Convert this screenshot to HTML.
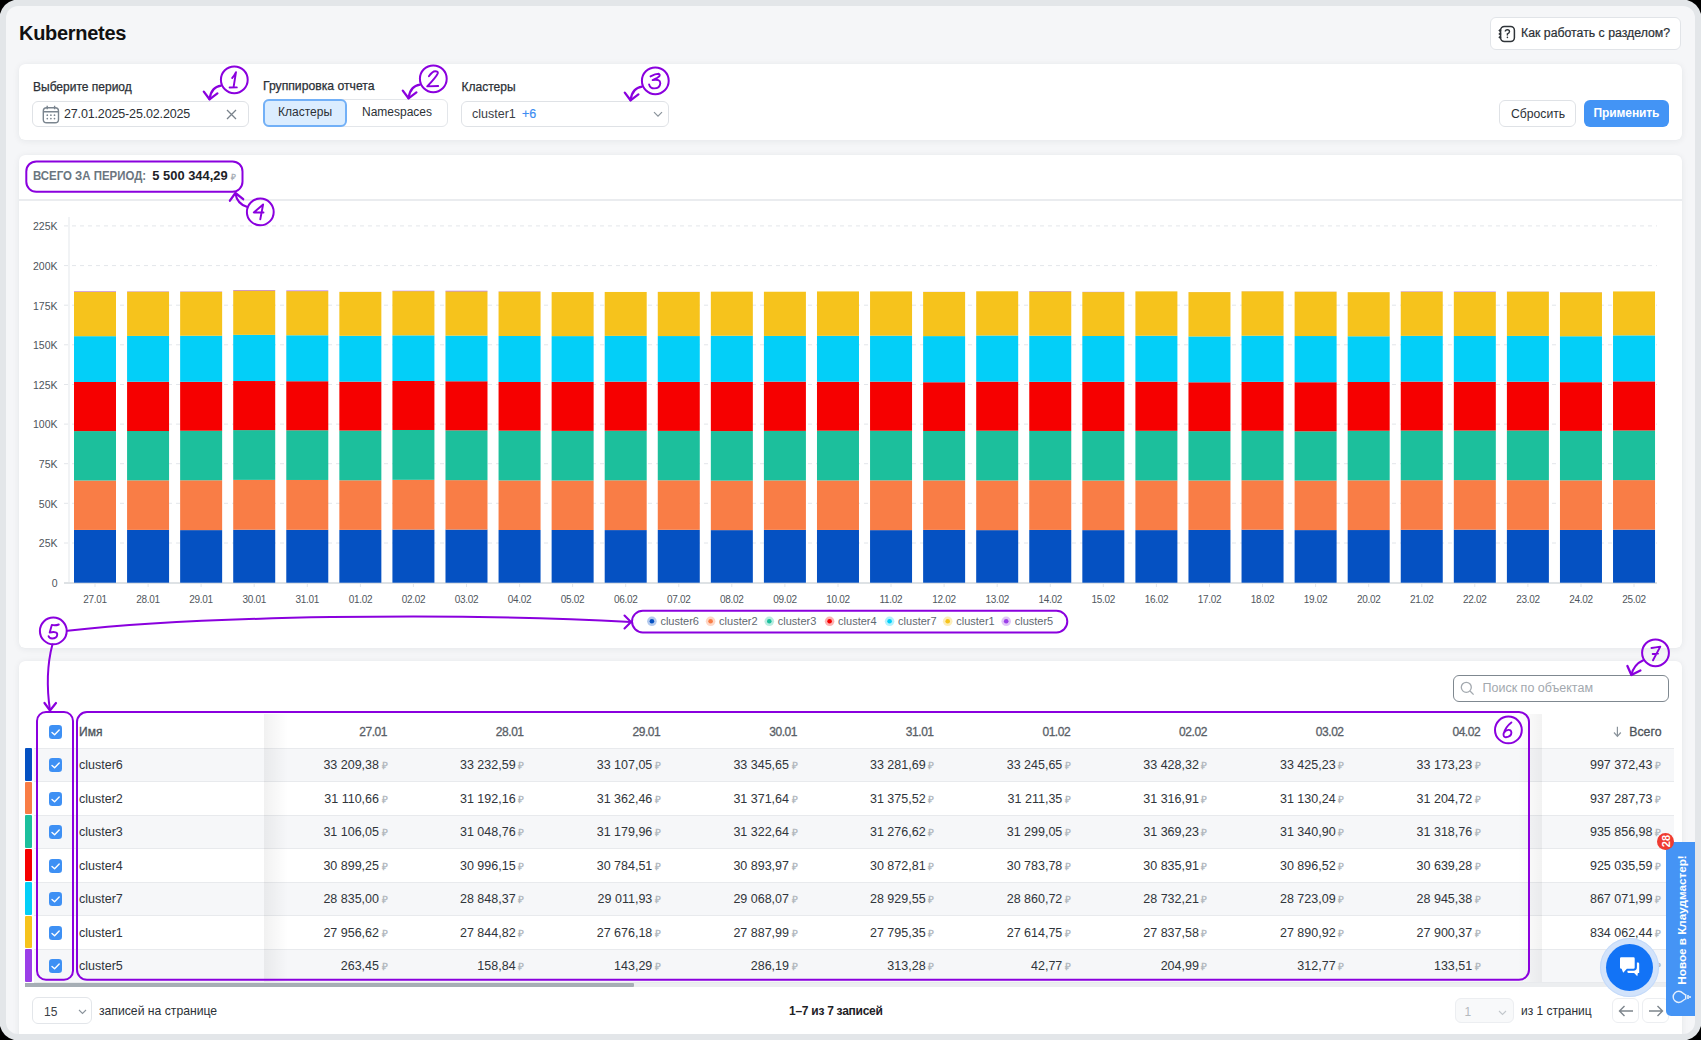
<!DOCTYPE html>
<html><head><meta charset="utf-8"><title>Kubernetes</title>
<style>
*{box-sizing:border-box;margin:0;padding:0}
html,body{width:1701px;height:1040px;overflow:hidden;background:#000;font-family:"Liberation Sans",sans-serif;color:#2a2f35}
.abs{position:absolute}
.frame{position:absolute;left:0;top:0;width:1701px;height:1040px;background:#e3e6e9;border-radius:15px;overflow:hidden}
.inner{position:absolute;left:6px;top:6px;width:1689px;height:1028px;background:#f5f6f8;border-radius:12px;overflow:hidden}
.card{position:absolute;background:#fff;border-radius:6px;box-shadow:0 1px 7px rgba(30,40,55,0.07),0 0 1px rgba(30,40,55,0.05)}
.t{position:absolute;white-space:nowrap;line-height:1}
.btn{position:absolute;background:#fff;border:1px solid #dfe2e6;border-radius:6px}
.lbl{font-size:12px;color:#2b3036;-webkit-text-stroke:0.25px #2b3036}
.rub{font-size:10px;font-weight:bold;color:#b3b9bf;margin-left:2.5px}
.row{position:absolute;left:0;width:1655px;height:33.5px;border-bottom:1px solid #e9ebee}
.cell{position:absolute;white-space:nowrap;font-size:12.5px;color:#30353a;line-height:1}
</style></head><body>
<svg class="abs" style="left:0;top:0" width="1701" height="1040"><path d="M14 0H1687Q1698 3 1701 14V1026Q1698 1037 1687 1040H14Q3 1037 0 1026V14Q3 3 14 0z" fill="#e3e6e9"/></svg><div class="inner"></div>

<div class="abs" style="left:0;top:0;width:1701px;height:1040px;overflow:hidden;clip-path:inset(6px 6px 6px 6px round 12px)">
<div class="t" style="left:19px;top:23px;font-size:20px;font-weight:bold;color:#111;letter-spacing:-0.3px">Kubernetes</div>
<div class="btn" style="left:1490px;top:17px;width:191px;height:33px;border-color:#e1e4e8"></div>
<svg class="abs" style="left:0;top:0" width="1701" height="1040"><g fill="none" stroke="#2f3439" stroke-width="1.5">
<rect x="1500.6" y="26.4" width="13.8" height="15.2" rx="3.8"/>
<path d="M1505.3 31.6Q1505.3 29.7 1507.4 29.7Q1509.5 29.7 1509.5 31.5Q1509.5 32.9 1507.4 33.8V35.6" stroke-width="1.4"/></g>
<g fill="#2f3439"><circle cx="1507.4" cy="37.4" r="0.8"/><path d="M1498.3 30.5l1.6-1.4 1.6 1.4-1.6 1.4zM1498.3 33.9l1.6-1.4 1.6 1.4-1.6 1.4zM1498.3 37.3l1.6-1.4 1.6 1.4-1.6 1.4z"/></g></svg>
<div class="t" style="left:1521px;top:27px;font-size:12.3px;color:#2b3036;-webkit-text-stroke:0.2px #2b3036">Как работать с разделом?</div>
<div class="card" style="left:19px;top:64px;width:1663px;height:75.5px"></div>
<div class="t lbl" style="left:33px;top:81px">Выберите период</div>
<div class="btn" style="left:32px;top:100.5px;width:216.5px;height:26px">
<svg class="abs" style="left:8.5px;top:3.5px" width="18" height="19" viewBox="0 0 18 19"><rect x="1.3" y="2.8" width="15.2" height="15" rx="3.4" fill="none" stroke="#7b858f" stroke-width="1.4"/>
<path d="M1.3 6.8h15.2M5.2 0.8v3.4M12.6 0.8v3.4" stroke="#7b858f" stroke-width="1.4"/>
<g fill="#7b858f"><circle cx="5.3" cy="10.2" r=".85"/><circle cx="8.9" cy="10.2" r=".85"/><circle cx="12.5" cy="10.2" r=".85"/><circle cx="5.3" cy="13.6" r=".85"/><circle cx="8.9" cy="13.6" r=".85"/><circle cx="12.5" cy="13.6" r=".85"/></g></svg>
<div class="t" style="left:31px;top:6px;font-size:12.5px;color:#2b3036;letter-spacing:-0.15px">27.01.2025-25.02.2025</div>
<svg class="abs" style="left:192.5px;top:7.5px" width="11" height="11" viewBox="0 0 11 11"><path d="M1 1l9 9M10 1l-9 9" stroke="#79828b" stroke-width="1.3"/></svg>
</div>
<div class="t lbl" style="left:263px;top:80px;font-size:12.2px">Группировка отчета</div>
<div class="btn" style="left:263px;top:98.5px;width:184.5px;height:28px;border-color:#e3e6ea"></div>
<div class="abs" style="left:263px;top:98.5px;width:84px;height:28px;background:#dbedff;border:2px solid #72b0f7;border-radius:6px"></div>
<div class="t" style="left:278px;top:106px;font-size:12px;color:#2b3036">Кластеры</div>
<div class="t" style="left:362px;top:106px;font-size:12px;color:#2b3036">Namespaces</div>
<div class="t lbl" style="left:461.5px;top:80.5px">Кластеры</div>
<div class="btn" style="left:461px;top:100.5px;width:208px;height:26px">
<div class="t" style="left:10px;top:6px;font-size:12.5px;color:#3b4046">cluster1</div>
<div class="t" style="left:60px;top:6px;font-size:12.5px;color:#3d8ef2;-webkit-text-stroke:0.2px #3d8ef2">+6</div>
<svg class="abs" style="left:191px;top:9px" width="10" height="7" viewBox="0 0 10 7"><path d="M1 1.2l4 4 4-4" fill="none" stroke="#8a939b" stroke-width="1.2"/></svg>
</div>
<div class="btn" style="left:1499px;top:100.3px;width:76.5px;height:26.5px;border-color:#dfe2e6">
<div class="t" style="left:11px;top:7px;font-size:12.2px;color:#2b3036">Сбросить</div></div>
<div class="abs" style="left:1583.5px;top:100.3px;width:85.5px;height:26.5px;background:#4394f5;border-radius:6px">
<div class="t" style="left:10px;top:7px;font-size:12px;font-weight:bold;color:#fff;letter-spacing:-0.1px">Применить</div></div>
<div class="card" style="left:19px;top:154.5px;width:1663px;height:493px"></div>
<div class="abs" style="left:19px;top:199px;width:1663px;height:1.6px;background:#eaecef"></div>
<div class="t" style="left:32.7px;top:169.5px;font-size:12.5px;font-weight:bold;color:#6b7680;transform:scaleX(0.915);transform-origin:0 0">ВСЕГО ЗА ПЕРИОД:</div>
<div class="t" style="left:152.3px;top:169.5px;font-size:12.9px;font-weight:bold;color:#1d2126">5 500 344,29<span style="font-size:8.5px;color:#a9b0b7;margin-left:3px;font-weight:bold">₽</span></div>
<svg class="abs" style="left:0;top:0" width="1701" height="1040" viewBox="0 0 1701 1040"><line x1="64" y1="225.9" x2="1657" y2="225.9" stroke="#e3e6ea" stroke-width="1" stroke-dasharray="4 4"/><text x="57.5" y="230.2" font-size="10.5" fill="#4d545b" text-anchor="end" font-family="Liberation Sans">225K</text><line x1="64" y1="265.6" x2="1657" y2="265.6" stroke="#e3e6ea" stroke-width="1" stroke-dasharray="4 4"/><text x="57.5" y="269.9" font-size="10.5" fill="#4d545b" text-anchor="end" font-family="Liberation Sans">200K</text><line x1="64" y1="305.2" x2="1657" y2="305.2" stroke="#e3e6ea" stroke-width="1" stroke-dasharray="4 4"/><text x="57.5" y="309.5" font-size="10.5" fill="#4d545b" text-anchor="end" font-family="Liberation Sans">175K</text><line x1="64" y1="344.8" x2="1657" y2="344.8" stroke="#e3e6ea" stroke-width="1" stroke-dasharray="4 4"/><text x="57.5" y="349.1" font-size="10.5" fill="#4d545b" text-anchor="end" font-family="Liberation Sans">150K</text><line x1="64" y1="384.5" x2="1657" y2="384.5" stroke="#e3e6ea" stroke-width="1" stroke-dasharray="4 4"/><text x="57.5" y="388.8" font-size="10.5" fill="#4d545b" text-anchor="end" font-family="Liberation Sans">125K</text><line x1="64" y1="424.1" x2="1657" y2="424.1" stroke="#e3e6ea" stroke-width="1" stroke-dasharray="4 4"/><text x="57.5" y="428.4" font-size="10.5" fill="#4d545b" text-anchor="end" font-family="Liberation Sans">100K</text><line x1="64" y1="463.7" x2="1657" y2="463.7" stroke="#e3e6ea" stroke-width="1" stroke-dasharray="4 4"/><text x="57.5" y="468.0" font-size="10.5" fill="#4d545b" text-anchor="end" font-family="Liberation Sans">75K</text><line x1="64" y1="503.3" x2="1657" y2="503.3" stroke="#e3e6ea" stroke-width="1" stroke-dasharray="4 4"/><text x="57.5" y="507.6" font-size="10.5" fill="#4d545b" text-anchor="end" font-family="Liberation Sans">50K</text><line x1="64" y1="543.0" x2="1657" y2="543.0" stroke="#e3e6ea" stroke-width="1" stroke-dasharray="4 4"/><text x="57.5" y="547.3" font-size="10.5" fill="#4d545b" text-anchor="end" font-family="Liberation Sans">25K</text><text x="57.5" y="586.9" font-size="10.5" fill="#4d545b" text-anchor="end" font-family="Liberation Sans">0</text><line x1="64" y1="583" x2="1657" y2="583" stroke="#d3d8dc" stroke-width="1.3"/><line x1="69" y1="217" x2="69" y2="582" stroke="#e8ebee" stroke-width="1.2"/><rect x="74.00" y="529.94" width="42" height="52.76" fill="#0551c2"/><rect x="74.00" y="480.51" width="42" height="49.43" fill="#f97d46"/><rect x="74.00" y="431.09" width="42" height="49.42" fill="#1cbf9c"/><rect x="74.00" y="381.99" width="42" height="49.09" fill="#f60000"/><rect x="74.00" y="336.18" width="42" height="45.81" fill="#03cff8"/><rect x="74.00" y="291.76" width="42" height="44.42" fill="#f6c31c"/><rect x="74.00" y="291.35" width="42" height="0.42" fill="#9b3ee8"/><line x1="95.0" y1="584" x2="95.0" y2="587" stroke="#e3e6ea" stroke-width="1"/><text x="95.0" y="603" font-size="10" letter-spacing="-0.3" fill="#50575e" text-anchor="middle" font-family="Liberation Sans">27.01</text><rect x="127.07" y="529.90" width="42" height="52.80" fill="#0551c2"/><rect x="127.07" y="480.34" width="42" height="49.56" fill="#f97d46"/><rect x="127.07" y="431.01" width="42" height="49.33" fill="#1cbf9c"/><rect x="127.07" y="381.77" width="42" height="49.25" fill="#f60000"/><rect x="127.07" y="335.93" width="42" height="45.83" fill="#03cff8"/><rect x="127.07" y="291.69" width="42" height="44.24" fill="#f6c31c"/><rect x="127.07" y="291.44" width="42" height="0.25" fill="#9b3ee8"/><line x1="148.1" y1="584" x2="148.1" y2="587" stroke="#e3e6ea" stroke-width="1"/><text x="148.1" y="603" font-size="10" letter-spacing="-0.3" fill="#50575e" text-anchor="middle" font-family="Liberation Sans">28.01</text><rect x="180.14" y="530.10" width="42" height="52.60" fill="#0551c2"/><rect x="180.14" y="480.27" width="42" height="49.83" fill="#f97d46"/><rect x="180.14" y="430.73" width="42" height="49.54" fill="#1cbf9c"/><rect x="180.14" y="381.82" width="42" height="48.91" fill="#f60000"/><rect x="180.14" y="335.73" width="42" height="46.09" fill="#03cff8"/><rect x="180.14" y="291.76" width="42" height="43.97" fill="#f6c31c"/><rect x="180.14" y="291.53" width="42" height="0.23" fill="#9b3ee8"/><line x1="201.1" y1="584" x2="201.1" y2="587" stroke="#e3e6ea" stroke-width="1"/><text x="201.1" y="603" font-size="10" letter-spacing="-0.3" fill="#50575e" text-anchor="middle" font-family="Liberation Sans">29.01</text><rect x="233.21" y="529.72" width="42" height="52.98" fill="#0551c2"/><rect x="233.21" y="479.88" width="42" height="49.84" fill="#f97d46"/><rect x="233.21" y="430.11" width="42" height="49.77" fill="#1cbf9c"/><rect x="233.21" y="381.03" width="42" height="49.08" fill="#f60000"/><rect x="233.21" y="334.84" width="42" height="46.18" fill="#03cff8"/><rect x="233.21" y="290.54" width="42" height="44.31" fill="#f6c31c"/><rect x="233.21" y="290.08" width="42" height="0.45" fill="#9b3ee8"/><line x1="254.2" y1="584" x2="254.2" y2="587" stroke="#e3e6ea" stroke-width="1"/><text x="254.2" y="603" font-size="10" letter-spacing="-0.3" fill="#50575e" text-anchor="middle" font-family="Liberation Sans">30.01</text><rect x="286.28" y="529.82" width="42" height="52.88" fill="#0551c2"/><rect x="286.28" y="479.97" width="42" height="49.85" fill="#f97d46"/><rect x="286.28" y="430.28" width="42" height="49.69" fill="#1cbf9c"/><rect x="286.28" y="381.23" width="42" height="49.05" fill="#f60000"/><rect x="286.28" y="335.27" width="42" height="45.96" fill="#03cff8"/><rect x="286.28" y="291.11" width="42" height="44.16" fill="#f6c31c"/><rect x="286.28" y="290.61" width="42" height="0.50" fill="#9b3ee8"/><line x1="307.3" y1="584" x2="307.3" y2="587" stroke="#e3e6ea" stroke-width="1"/><text x="307.3" y="603" font-size="10" letter-spacing="-0.3" fill="#50575e" text-anchor="middle" font-family="Liberation Sans">31.01</text><rect x="339.35" y="529.88" width="42" height="52.82" fill="#0551c2"/><rect x="339.35" y="480.29" width="42" height="49.59" fill="#f97d46"/><rect x="339.35" y="430.56" width="42" height="49.73" fill="#1cbf9c"/><rect x="339.35" y="381.65" width="42" height="48.91" fill="#f60000"/><rect x="339.35" y="335.80" width="42" height="45.85" fill="#03cff8"/><rect x="339.35" y="291.93" width="42" height="43.87" fill="#f6c31c"/><rect x="339.35" y="291.86" width="42" height="0.07" fill="#9b3ee8"/><line x1="360.4" y1="584" x2="360.4" y2="587" stroke="#e3e6ea" stroke-width="1"/><text x="360.4" y="603" font-size="10" letter-spacing="-0.3" fill="#50575e" text-anchor="middle" font-family="Liberation Sans">01.02</text><rect x="392.42" y="529.59" width="42" height="53.11" fill="#0551c2"/><rect x="392.42" y="479.83" width="42" height="49.76" fill="#f97d46"/><rect x="392.42" y="429.99" width="42" height="49.84" fill="#1cbf9c"/><rect x="392.42" y="381.00" width="42" height="48.99" fill="#f60000"/><rect x="392.42" y="335.35" width="42" height="45.65" fill="#03cff8"/><rect x="392.42" y="291.12" width="42" height="44.23" fill="#f6c31c"/><rect x="392.42" y="290.80" width="42" height="0.33" fill="#9b3ee8"/><line x1="413.4" y1="584" x2="413.4" y2="587" stroke="#e3e6ea" stroke-width="1"/><text x="413.4" y="603" font-size="10" letter-spacing="-0.3" fill="#50575e" text-anchor="middle" font-family="Liberation Sans">02.02</text><rect x="445.49" y="529.59" width="42" height="53.11" fill="#0551c2"/><rect x="445.49" y="480.13" width="42" height="49.46" fill="#f97d46"/><rect x="445.49" y="430.34" width="42" height="49.79" fill="#1cbf9c"/><rect x="445.49" y="381.25" width="42" height="49.09" fill="#f60000"/><rect x="445.49" y="335.62" width="42" height="45.64" fill="#03cff8"/><rect x="445.49" y="291.30" width="42" height="44.31" fill="#f6c31c"/><rect x="445.49" y="290.81" width="42" height="0.50" fill="#9b3ee8"/><line x1="466.5" y1="584" x2="466.5" y2="587" stroke="#e3e6ea" stroke-width="1"/><text x="466.5" y="603" font-size="10" letter-spacing="-0.3" fill="#50575e" text-anchor="middle" font-family="Liberation Sans">03.02</text><rect x="498.56" y="529.99" width="42" height="52.71" fill="#0551c2"/><rect x="498.56" y="480.42" width="42" height="49.58" fill="#f97d46"/><rect x="498.56" y="430.66" width="42" height="49.76" fill="#1cbf9c"/><rect x="498.56" y="381.98" width="42" height="48.68" fill="#f60000"/><rect x="498.56" y="335.99" width="42" height="45.99" fill="#03cff8"/><rect x="498.56" y="291.66" width="42" height="44.33" fill="#f6c31c"/><rect x="498.56" y="291.45" width="42" height="0.21" fill="#9b3ee8"/><line x1="519.6" y1="584" x2="519.6" y2="587" stroke="#e3e6ea" stroke-width="1"/><text x="519.6" y="603" font-size="10" letter-spacing="-0.3" fill="#50575e" text-anchor="middle" font-family="Liberation Sans">04.02</text><rect x="551.63" y="529.99" width="42" height="52.71" fill="#0551c2"/><rect x="551.63" y="480.55" width="42" height="49.44" fill="#f97d46"/><rect x="551.63" y="430.87" width="42" height="49.67" fill="#1cbf9c"/><rect x="551.63" y="381.83" width="42" height="49.04" fill="#f60000"/><rect x="551.63" y="336.11" width="42" height="45.73" fill="#03cff8"/><rect x="551.63" y="292.08" width="42" height="44.03" fill="#f6c31c"/><rect x="551.63" y="292.07" width="42" height="0.01" fill="#9b3ee8"/><line x1="572.6" y1="584" x2="572.6" y2="587" stroke="#e3e6ea" stroke-width="1"/><text x="572.6" y="603" font-size="10" letter-spacing="-0.3" fill="#50575e" text-anchor="middle" font-family="Liberation Sans">05.02</text><rect x="604.70" y="530.08" width="42" height="52.62" fill="#0551c2"/><rect x="604.70" y="480.29" width="42" height="49.78" fill="#f97d46"/><rect x="604.70" y="430.67" width="42" height="49.63" fill="#1cbf9c"/><rect x="604.70" y="381.64" width="42" height="49.03" fill="#f60000"/><rect x="604.70" y="335.84" width="42" height="45.79" fill="#03cff8"/><rect x="604.70" y="291.96" width="42" height="43.89" fill="#f6c31c"/><rect x="604.70" y="291.96" width="42" height="0.00" fill="#9b3ee8"/><line x1="625.7" y1="584" x2="625.7" y2="587" stroke="#e3e6ea" stroke-width="1"/><text x="625.7" y="603" font-size="10" letter-spacing="-0.3" fill="#50575e" text-anchor="middle" font-family="Liberation Sans">06.02</text><rect x="657.77" y="529.82" width="42" height="52.88" fill="#0551c2"/><rect x="657.77" y="480.28" width="42" height="49.54" fill="#f97d46"/><rect x="657.77" y="430.88" width="42" height="49.39" fill="#1cbf9c"/><rect x="657.77" y="381.92" width="42" height="48.96" fill="#f60000"/><rect x="657.77" y="336.05" width="42" height="45.87" fill="#03cff8"/><rect x="657.77" y="291.94" width="42" height="44.11" fill="#f6c31c"/><rect x="657.77" y="291.87" width="42" height="0.07" fill="#9b3ee8"/><line x1="678.8" y1="584" x2="678.8" y2="587" stroke="#e3e6ea" stroke-width="1"/><text x="678.8" y="603" font-size="10" letter-spacing="-0.3" fill="#50575e" text-anchor="middle" font-family="Liberation Sans">07.02</text><rect x="710.84" y="530.12" width="42" height="52.58" fill="#0551c2"/><rect x="710.84" y="480.63" width="42" height="49.48" fill="#f97d46"/><rect x="710.84" y="431.07" width="42" height="49.56" fill="#1cbf9c"/><rect x="710.84" y="381.89" width="42" height="49.18" fill="#f60000"/><rect x="710.84" y="335.76" width="42" height="46.14" fill="#03cff8"/><rect x="710.84" y="291.67" width="42" height="44.09" fill="#f6c31c"/><rect x="710.84" y="291.67" width="42" height="0.00" fill="#9b3ee8"/><line x1="731.8" y1="584" x2="731.8" y2="587" stroke="#e3e6ea" stroke-width="1"/><text x="731.8" y="603" font-size="10" letter-spacing="-0.3" fill="#50575e" text-anchor="middle" font-family="Liberation Sans">08.02</text><rect x="763.91" y="529.88" width="42" height="52.82" fill="#0551c2"/><rect x="763.91" y="480.41" width="42" height="49.47" fill="#f97d46"/><rect x="763.91" y="430.87" width="42" height="49.54" fill="#1cbf9c"/><rect x="763.91" y="381.63" width="42" height="49.24" fill="#f60000"/><rect x="763.91" y="335.93" width="42" height="45.70" fill="#03cff8"/><rect x="763.91" y="291.74" width="42" height="44.19" fill="#f6c31c"/><rect x="763.91" y="291.74" width="42" height="0.00" fill="#9b3ee8"/><line x1="784.9" y1="584" x2="784.9" y2="587" stroke="#e3e6ea" stroke-width="1"/><text x="784.9" y="603" font-size="10" letter-spacing="-0.3" fill="#50575e" text-anchor="middle" font-family="Liberation Sans">09.02</text><rect x="816.98" y="529.97" width="42" height="52.73" fill="#0551c2"/><rect x="816.98" y="480.41" width="42" height="49.55" fill="#f97d46"/><rect x="816.98" y="430.70" width="42" height="49.72" fill="#1cbf9c"/><rect x="816.98" y="381.73" width="42" height="48.97" fill="#f60000"/><rect x="816.98" y="335.83" width="42" height="45.90" fill="#03cff8"/><rect x="816.98" y="291.42" width="42" height="44.40" fill="#f6c31c"/><rect x="816.98" y="291.42" width="42" height="0.00" fill="#9b3ee8"/><line x1="838.0" y1="584" x2="838.0" y2="587" stroke="#e3e6ea" stroke-width="1"/><text x="838.0" y="603" font-size="10" letter-spacing="-0.3" fill="#50575e" text-anchor="middle" font-family="Liberation Sans">10.02</text><rect x="870.05" y="530.12" width="42" height="52.58" fill="#0551c2"/><rect x="870.05" y="480.36" width="42" height="49.77" fill="#f97d46"/><rect x="870.05" y="430.72" width="42" height="49.64" fill="#1cbf9c"/><rect x="870.05" y="381.64" width="42" height="49.08" fill="#f60000"/><rect x="870.05" y="335.68" width="42" height="45.96" fill="#03cff8"/><rect x="870.05" y="291.42" width="42" height="44.26" fill="#f6c31c"/><rect x="870.05" y="291.42" width="42" height="0.00" fill="#9b3ee8"/><line x1="891.0" y1="584" x2="891.0" y2="587" stroke="#e3e6ea" stroke-width="1"/><text x="891.0" y="603" font-size="10" letter-spacing="-0.3" fill="#50575e" text-anchor="middle" font-family="Liberation Sans">11.02</text><rect x="923.12" y="529.89" width="42" height="52.81" fill="#0551c2"/><rect x="923.12" y="480.40" width="42" height="49.50" fill="#f97d46"/><rect x="923.12" y="430.98" width="42" height="49.42" fill="#1cbf9c"/><rect x="923.12" y="382.24" width="42" height="48.73" fill="#f60000"/><rect x="923.12" y="336.10" width="42" height="46.14" fill="#03cff8"/><rect x="923.12" y="291.94" width="42" height="44.17" fill="#f6c31c"/><rect x="923.12" y="291.86" width="42" height="0.08" fill="#9b3ee8"/><line x1="944.1" y1="584" x2="944.1" y2="587" stroke="#e3e6ea" stroke-width="1"/><text x="944.1" y="603" font-size="10" letter-spacing="-0.3" fill="#50575e" text-anchor="middle" font-family="Liberation Sans">12.02</text><rect x="976.19" y="530.13" width="42" height="52.57" fill="#0551c2"/><rect x="976.19" y="480.47" width="42" height="49.67" fill="#f97d46"/><rect x="976.19" y="430.70" width="42" height="49.77" fill="#1cbf9c"/><rect x="976.19" y="381.60" width="42" height="49.10" fill="#f60000"/><rect x="976.19" y="335.49" width="42" height="46.11" fill="#03cff8"/><rect x="976.19" y="291.27" width="42" height="44.22" fill="#f6c31c"/><rect x="976.19" y="291.27" width="42" height="0.00" fill="#9b3ee8"/><line x1="997.2" y1="584" x2="997.2" y2="587" stroke="#e3e6ea" stroke-width="1"/><text x="997.2" y="603" font-size="10" letter-spacing="-0.3" fill="#50575e" text-anchor="middle" font-family="Liberation Sans">13.02</text><rect x="1029.26" y="529.93" width="42" height="52.77" fill="#0551c2"/><rect x="1029.26" y="480.24" width="42" height="49.69" fill="#f97d46"/><rect x="1029.26" y="430.91" width="42" height="49.33" fill="#1cbf9c"/><rect x="1029.26" y="381.84" width="42" height="49.07" fill="#f60000"/><rect x="1029.26" y="335.71" width="42" height="46.13" fill="#03cff8"/><rect x="1029.26" y="291.46" width="42" height="44.25" fill="#f6c31c"/><rect x="1029.26" y="291.16" width="42" height="0.30" fill="#9b3ee8"/><line x1="1050.3" y1="584" x2="1050.3" y2="587" stroke="#e3e6ea" stroke-width="1"/><text x="1050.3" y="603" font-size="10" letter-spacing="-0.3" fill="#50575e" text-anchor="middle" font-family="Liberation Sans">14.02</text><rect x="1082.33" y="530.12" width="42" height="52.58" fill="#0551c2"/><rect x="1082.33" y="480.54" width="42" height="49.58" fill="#f97d46"/><rect x="1082.33" y="431.06" width="42" height="49.48" fill="#1cbf9c"/><rect x="1082.33" y="381.79" width="42" height="49.26" fill="#f60000"/><rect x="1082.33" y="335.98" width="42" height="45.81" fill="#03cff8"/><rect x="1082.33" y="292.07" width="42" height="43.92" fill="#f6c31c"/><rect x="1082.33" y="291.88" width="42" height="0.19" fill="#9b3ee8"/><line x1="1103.3" y1="584" x2="1103.3" y2="587" stroke="#e3e6ea" stroke-width="1"/><text x="1103.3" y="603" font-size="10" letter-spacing="-0.3" fill="#50575e" text-anchor="middle" font-family="Liberation Sans">15.02</text><rect x="1135.40" y="530.11" width="42" height="52.59" fill="#0551c2"/><rect x="1135.40" y="480.45" width="42" height="49.65" fill="#f97d46"/><rect x="1135.40" y="430.80" width="42" height="49.66" fill="#1cbf9c"/><rect x="1135.40" y="381.63" width="42" height="49.17" fill="#f60000"/><rect x="1135.40" y="335.75" width="42" height="45.89" fill="#03cff8"/><rect x="1135.40" y="291.37" width="42" height="44.37" fill="#f6c31c"/><rect x="1135.40" y="291.37" width="42" height="0.00" fill="#9b3ee8"/><line x1="1156.4" y1="584" x2="1156.4" y2="587" stroke="#e3e6ea" stroke-width="1"/><text x="1156.4" y="603" font-size="10" letter-spacing="-0.3" fill="#50575e" text-anchor="middle" font-family="Liberation Sans">16.02</text><rect x="1188.47" y="529.94" width="42" height="52.76" fill="#0551c2"/><rect x="1188.47" y="480.49" width="42" height="49.45" fill="#f97d46"/><rect x="1188.47" y="431.14" width="42" height="49.35" fill="#1cbf9c"/><rect x="1188.47" y="382.28" width="42" height="48.86" fill="#f60000"/><rect x="1188.47" y="336.42" width="42" height="45.86" fill="#03cff8"/><rect x="1188.47" y="292.11" width="42" height="44.31" fill="#f6c31c"/><rect x="1188.47" y="292.08" width="42" height="0.03" fill="#9b3ee8"/><line x1="1209.5" y1="584" x2="1209.5" y2="587" stroke="#e3e6ea" stroke-width="1"/><text x="1209.5" y="603" font-size="10" letter-spacing="-0.3" fill="#50575e" text-anchor="middle" font-family="Liberation Sans">17.02</text><rect x="1241.54" y="529.73" width="42" height="52.97" fill="#0551c2"/><rect x="1241.54" y="480.28" width="42" height="49.45" fill="#f97d46"/><rect x="1241.54" y="430.76" width="42" height="49.52" fill="#1cbf9c"/><rect x="1241.54" y="381.85" width="42" height="48.92" fill="#f60000"/><rect x="1241.54" y="335.70" width="42" height="46.14" fill="#03cff8"/><rect x="1241.54" y="291.34" width="42" height="44.36" fill="#f6c31c"/><rect x="1241.54" y="291.27" width="42" height="0.07" fill="#9b3ee8"/><line x1="1262.5" y1="584" x2="1262.5" y2="587" stroke="#e3e6ea" stroke-width="1"/><text x="1262.5" y="603" font-size="10" letter-spacing="-0.3" fill="#50575e" text-anchor="middle" font-family="Liberation Sans">18.02</text><rect x="1294.61" y="530.09" width="42" height="52.61" fill="#0551c2"/><rect x="1294.61" y="480.58" width="42" height="49.51" fill="#f97d46"/><rect x="1294.61" y="431.29" width="42" height="49.29" fill="#1cbf9c"/><rect x="1294.61" y="382.21" width="42" height="49.08" fill="#f60000"/><rect x="1294.61" y="336.03" width="42" height="46.18" fill="#03cff8"/><rect x="1294.61" y="291.71" width="42" height="44.32" fill="#f6c31c"/><rect x="1294.61" y="291.63" width="42" height="0.08" fill="#9b3ee8"/><line x1="1315.6" y1="584" x2="1315.6" y2="587" stroke="#e3e6ea" stroke-width="1"/><text x="1315.6" y="603" font-size="10" letter-spacing="-0.3" fill="#50575e" text-anchor="middle" font-family="Liberation Sans">19.02</text><rect x="1347.68" y="530.04" width="42" height="52.66" fill="#0551c2"/><rect x="1347.68" y="480.33" width="42" height="49.71" fill="#f97d46"/><rect x="1347.68" y="430.72" width="42" height="49.61" fill="#1cbf9c"/><rect x="1347.68" y="382.01" width="42" height="48.71" fill="#f60000"/><rect x="1347.68" y="336.27" width="42" height="45.74" fill="#03cff8"/><rect x="1347.68" y="292.17" width="42" height="44.10" fill="#f6c31c"/><rect x="1347.68" y="292.17" width="42" height="0.00" fill="#9b3ee8"/><line x1="1368.7" y1="584" x2="1368.7" y2="587" stroke="#e3e6ea" stroke-width="1"/><text x="1368.7" y="603" font-size="10" letter-spacing="-0.3" fill="#50575e" text-anchor="middle" font-family="Liberation Sans">20.02</text><rect x="1400.75" y="529.83" width="42" height="52.87" fill="#0551c2"/><rect x="1400.75" y="480.23" width="42" height="49.60" fill="#f97d46"/><rect x="1400.75" y="430.57" width="42" height="49.66" fill="#1cbf9c"/><rect x="1400.75" y="381.61" width="42" height="48.96" fill="#f60000"/><rect x="1400.75" y="335.85" width="42" height="45.76" fill="#03cff8"/><rect x="1400.75" y="291.75" width="42" height="44.10" fill="#f6c31c"/><rect x="1400.75" y="291.47" width="42" height="0.29" fill="#9b3ee8"/><line x1="1421.8" y1="584" x2="1421.8" y2="587" stroke="#e3e6ea" stroke-width="1"/><text x="1421.8" y="603" font-size="10" letter-spacing="-0.3" fill="#50575e" text-anchor="middle" font-family="Liberation Sans">21.02</text><rect x="1453.82" y="529.67" width="42" height="53.03" fill="#0551c2"/><rect x="1453.82" y="480.11" width="42" height="49.55" fill="#f97d46"/><rect x="1453.82" y="430.55" width="42" height="49.56" fill="#1cbf9c"/><rect x="1453.82" y="381.76" width="42" height="48.79" fill="#f60000"/><rect x="1453.82" y="335.97" width="42" height="45.79" fill="#03cff8"/><rect x="1453.82" y="292.03" width="42" height="43.94" fill="#f6c31c"/><rect x="1453.82" y="291.68" width="42" height="0.35" fill="#9b3ee8"/><line x1="1474.8" y1="584" x2="1474.8" y2="587" stroke="#e3e6ea" stroke-width="1"/><text x="1474.8" y="603" font-size="10" letter-spacing="-0.3" fill="#50575e" text-anchor="middle" font-family="Liberation Sans">22.02</text><rect x="1506.89" y="529.86" width="42" height="52.84" fill="#0551c2"/><rect x="1506.89" y="480.19" width="42" height="49.67" fill="#f97d46"/><rect x="1506.89" y="430.47" width="42" height="49.72" fill="#1cbf9c"/><rect x="1506.89" y="381.71" width="42" height="48.77" fill="#f60000"/><rect x="1506.89" y="335.92" width="42" height="45.79" fill="#03cff8"/><rect x="1506.89" y="291.69" width="42" height="44.23" fill="#f6c31c"/><rect x="1506.89" y="291.57" width="42" height="0.12" fill="#9b3ee8"/><line x1="1527.9" y1="584" x2="1527.9" y2="587" stroke="#e3e6ea" stroke-width="1"/><text x="1527.9" y="603" font-size="10" letter-spacing="-0.3" fill="#50575e" text-anchor="middle" font-family="Liberation Sans">23.02</text><rect x="1559.96" y="529.95" width="42" height="52.75" fill="#0551c2"/><rect x="1559.96" y="480.34" width="42" height="49.61" fill="#f97d46"/><rect x="1559.96" y="430.91" width="42" height="49.43" fill="#1cbf9c"/><rect x="1559.96" y="382.17" width="42" height="48.73" fill="#f60000"/><rect x="1559.96" y="336.25" width="42" height="45.92" fill="#03cff8"/><rect x="1559.96" y="292.33" width="42" height="43.92" fill="#f6c31c"/><rect x="1559.96" y="292.20" width="42" height="0.13" fill="#9b3ee8"/><line x1="1581.0" y1="584" x2="1581.0" y2="587" stroke="#e3e6ea" stroke-width="1"/><text x="1581.0" y="603" font-size="10" letter-spacing="-0.3" fill="#50575e" text-anchor="middle" font-family="Liberation Sans">24.02</text><rect x="1613.03" y="529.65" width="42" height="53.05" fill="#0551c2"/><rect x="1613.03" y="480.11" width="42" height="49.55" fill="#f97d46"/><rect x="1613.03" y="430.48" width="42" height="49.62" fill="#1cbf9c"/><rect x="1613.03" y="381.35" width="42" height="49.14" fill="#f60000"/><rect x="1613.03" y="335.37" width="42" height="45.98" fill="#03cff8"/><rect x="1613.03" y="291.44" width="42" height="43.92" fill="#f6c31c"/><rect x="1613.03" y="291.44" width="42" height="0.00" fill="#9b3ee8"/><line x1="1634.0" y1="584" x2="1634.0" y2="587" stroke="#e3e6ea" stroke-width="1"/><text x="1634.0" y="603" font-size="10" letter-spacing="-0.3" fill="#50575e" text-anchor="middle" font-family="Liberation Sans">25.02</text><circle cx="651.9" cy="621.3" r="4.8" fill="#0551c2" opacity="0.3"/><circle cx="651.9" cy="621.3" r="2.3" fill="#0551c2"/><text x="660.4" y="625" font-size="11" fill="#5f6870" font-family="Liberation Sans">cluster6</text><circle cx="710.6" cy="621.3" r="4.8" fill="#f97d46" opacity="0.3"/><circle cx="710.6" cy="621.3" r="2.3" fill="#f97d46"/><text x="719.1" y="625" font-size="11" fill="#5f6870" font-family="Liberation Sans">cluster2</text><circle cx="769.3" cy="621.3" r="4.8" fill="#1cbf9c" opacity="0.3"/><circle cx="769.3" cy="621.3" r="2.3" fill="#1cbf9c"/><text x="777.8" y="625" font-size="11" fill="#5f6870" font-family="Liberation Sans">cluster3</text><circle cx="829.6" cy="621.3" r="4.8" fill="#f60000" opacity="0.3"/><circle cx="829.6" cy="621.3" r="2.3" fill="#f60000"/><text x="838.1" y="625" font-size="11" fill="#5f6870" font-family="Liberation Sans">cluster4</text><circle cx="889.6" cy="621.3" r="4.8" fill="#03cff8" opacity="0.3"/><circle cx="889.6" cy="621.3" r="2.3" fill="#03cff8"/><text x="898.1" y="625" font-size="11" fill="#5f6870" font-family="Liberation Sans">cluster7</text><circle cx="947.7" cy="621.3" r="4.8" fill="#f6c31c" opacity="0.3"/><circle cx="947.7" cy="621.3" r="2.3" fill="#f6c31c"/><text x="956.2" y="625" font-size="11" fill="#5f6870" font-family="Liberation Sans">cluster1</text><circle cx="1006.2" cy="621.3" r="4.8" fill="#9b3ee8" opacity="0.3"/><circle cx="1006.2" cy="621.3" r="2.3" fill="#9b3ee8"/><text x="1014.7" y="625" font-size="11" fill="#5f6870" font-family="Liberation Sans">cluster5</text></svg>
<div class="card" style="left:19px;top:661px;width:1663px;height:400px"></div>
<div class="abs" style="left:1452.5px;top:675px;width:216.5px;height:26.5px;border:1.5px solid #7f8890;border-radius:6px;background:#fff">
<svg class="abs" style="left:6px;top:5px" width="15" height="15" viewBox="0 0 15 15"><circle cx="6.3" cy="6.3" r="5" fill="none" stroke="#a3a9af" stroke-width="1.3"/><path d="M10 10l3.6 3.6" stroke="#a3a9af" stroke-width="1.3"/></svg>
<div class="t" style="left:29px;top:6px;font-size:12.5px;color:#a2a8ae">Поиск по объектам</div></div>
<div class="abs" style="left:34px;top:714px;width:1640px;height:33.5px;background:#fff"></div><div class="abs" style="left:34px;top:747.5px;width:1640px;height:33.5px;background:#f6f7f9;border-top:1px solid #e8eaed"></div><div class="abs" style="left:34px;top:781.0px;width:1640px;height:33.5px;background:#ffffff;border-top:1px solid #e8eaed"></div><div class="abs" style="left:34px;top:814.5px;width:1640px;height:33.5px;background:#f6f7f9;border-top:1px solid #e8eaed"></div><div class="abs" style="left:34px;top:848.0px;width:1640px;height:33.5px;background:#ffffff;border-top:1px solid #e8eaed"></div><div class="abs" style="left:34px;top:881.5px;width:1640px;height:33.5px;background:#f6f7f9;border-top:1px solid #e8eaed"></div><div class="abs" style="left:34px;top:915.0px;width:1640px;height:33.5px;background:#ffffff;border-top:1px solid #e8eaed"></div><div class="abs" style="left:34px;top:948.5px;width:1640px;height:33.5px;background:#f6f7f9;border-top:1px solid #e8eaed"></div><div class="abs" style="left:34px;top:982.0px;width:1640px;height:1px;background:#e8eaed"></div><div class="abs" style="left:264px;top:714px;width:24px;height:268px;background:linear-gradient(90deg,rgba(0,0,0,0.055),rgba(0,0,0,0))"></div><div class="abs" style="left:1518px;top:714px;width:24px;height:268px;background:linear-gradient(270deg,rgba(0,0,0,0.05),rgba(0,0,0,0))"></div><svg class="abs" style="left:49px;top:724.5px" width="13" height="14" viewBox="0 0 13 14"><rect x="0" y="0" width="13" height="14" rx="3.3" fill="#3e90f4"/><path d="M3 7.4l2.6 2.3 4.6-4.6" fill="none" stroke="#fff" stroke-width="1.4" stroke-linecap="round" stroke-linejoin="round"/></svg><div class="t" style="left:79px;top:726px;font-size:12px;color:#4c535a;-webkit-text-stroke:0.3px #4c535a">Имя</div><div class="t" style="left:327.0px;width:60px;text-align:right;top:726px;font-size:12px;color:#596067;-webkit-text-stroke:0.3px #596067;letter-spacing:-0.45px">27.01</div><div class="t" style="left:463.6px;width:60px;text-align:right;top:726px;font-size:12px;color:#596067;-webkit-text-stroke:0.3px #596067;letter-spacing:-0.45px">28.01</div><div class="t" style="left:600.3px;width:60px;text-align:right;top:726px;font-size:12px;color:#596067;-webkit-text-stroke:0.3px #596067;letter-spacing:-0.45px">29.01</div><div class="t" style="left:737.0px;width:60px;text-align:right;top:726px;font-size:12px;color:#596067;-webkit-text-stroke:0.3px #596067;letter-spacing:-0.45px">30.01</div><div class="t" style="left:873.6px;width:60px;text-align:right;top:726px;font-size:12px;color:#596067;-webkit-text-stroke:0.3px #596067;letter-spacing:-0.45px">31.01</div><div class="t" style="left:1010.2px;width:60px;text-align:right;top:726px;font-size:12px;color:#596067;-webkit-text-stroke:0.3px #596067;letter-spacing:-0.45px">01.02</div><div class="t" style="left:1146.9px;width:60px;text-align:right;top:726px;font-size:12px;color:#596067;-webkit-text-stroke:0.3px #596067;letter-spacing:-0.45px">02.02</div><div class="t" style="left:1283.6px;width:60px;text-align:right;top:726px;font-size:12px;color:#596067;-webkit-text-stroke:0.3px #596067;letter-spacing:-0.45px">03.02</div><div class="t" style="left:1420.2px;width:60px;text-align:right;top:726px;font-size:12px;color:#596067;-webkit-text-stroke:0.3px #596067;letter-spacing:-0.45px">04.02</div><div class="t" style="left:1560px;width:101.5px;text-align:right;top:726px;font-size:12.3px;color:#4c535a;-webkit-text-stroke:0.3px #4c535a">Всего</div><svg class="abs" style="left:1612px;top:725px" width="12" height="13" viewBox="0 0 12 13"><path d="M5.4 1.8V11.3M2 7.5l3.4 3.8 3.4-3.8" fill="none" stroke="#8a939b" stroke-width="1.2"/></svg><div class="abs" style="left:25px;top:748.0px;width:7px;height:32.5px;background:#0551c2;border-radius:1px"></div><svg class="abs" style="left:49px;top:758.0px" width="13" height="14" viewBox="0 0 13 14"><rect x="0" y="0" width="13" height="14" rx="3.3" fill="#3e90f4"/><path d="M3 7.4l2.6 2.3 4.6-4.6" fill="none" stroke="#fff" stroke-width="1.4" stroke-linecap="round" stroke-linejoin="round"/></svg><div class="t" style="left:79px;top:759.0px;font-size:12.5px;color:#2f3439">cluster6</div><div class="cell" style="left:277.5px;width:110px;text-align:right;top:759.0px">33 209,38<span class="rub">₽</span></div><div class="cell" style="left:414.1px;width:110px;text-align:right;top:759.0px">33 232,59<span class="rub">₽</span></div><div class="cell" style="left:550.8px;width:110px;text-align:right;top:759.0px">33 107,05<span class="rub">₽</span></div><div class="cell" style="left:687.5px;width:110px;text-align:right;top:759.0px">33 345,65<span class="rub">₽</span></div><div class="cell" style="left:824.1px;width:110px;text-align:right;top:759.0px">33 281,69<span class="rub">₽</span></div><div class="cell" style="left:960.8px;width:110px;text-align:right;top:759.0px">33 245,65<span class="rub">₽</span></div><div class="cell" style="left:1097.4px;width:110px;text-align:right;top:759.0px">33 428,32<span class="rub">₽</span></div><div class="cell" style="left:1234.1px;width:110px;text-align:right;top:759.0px">33 425,23<span class="rub">₽</span></div><div class="cell" style="left:1370.7px;width:110px;text-align:right;top:759.0px">33 173,23<span class="rub">₽</span></div><div class="cell" style="left:1551.0px;width:110px;text-align:right;top:759.0px">997 372,43<span class="rub">₽</span></div><div class="abs" style="left:25px;top:781.5px;width:7px;height:32.5px;background:#f97d46;border-radius:1px"></div><svg class="abs" style="left:49px;top:791.5px" width="13" height="14" viewBox="0 0 13 14"><rect x="0" y="0" width="13" height="14" rx="3.3" fill="#3e90f4"/><path d="M3 7.4l2.6 2.3 4.6-4.6" fill="none" stroke="#fff" stroke-width="1.4" stroke-linecap="round" stroke-linejoin="round"/></svg><div class="t" style="left:79px;top:792.5px;font-size:12.5px;color:#2f3439">cluster2</div><div class="cell" style="left:277.5px;width:110px;text-align:right;top:792.5px">31 110,66<span class="rub">₽</span></div><div class="cell" style="left:414.1px;width:110px;text-align:right;top:792.5px">31 192,16<span class="rub">₽</span></div><div class="cell" style="left:550.8px;width:110px;text-align:right;top:792.5px">31 362,46<span class="rub">₽</span></div><div class="cell" style="left:687.5px;width:110px;text-align:right;top:792.5px">31 371,64<span class="rub">₽</span></div><div class="cell" style="left:824.1px;width:110px;text-align:right;top:792.5px">31 375,52<span class="rub">₽</span></div><div class="cell" style="left:960.8px;width:110px;text-align:right;top:792.5px">31 211,35<span class="rub">₽</span></div><div class="cell" style="left:1097.4px;width:110px;text-align:right;top:792.5px">31 316,91<span class="rub">₽</span></div><div class="cell" style="left:1234.1px;width:110px;text-align:right;top:792.5px">31 130,24<span class="rub">₽</span></div><div class="cell" style="left:1370.7px;width:110px;text-align:right;top:792.5px">31 204,72<span class="rub">₽</span></div><div class="cell" style="left:1551.0px;width:110px;text-align:right;top:792.5px">937 287,73<span class="rub">₽</span></div><div class="abs" style="left:25px;top:815.0px;width:7px;height:32.5px;background:#1cbf9c;border-radius:1px"></div><svg class="abs" style="left:49px;top:825.0px" width="13" height="14" viewBox="0 0 13 14"><rect x="0" y="0" width="13" height="14" rx="3.3" fill="#3e90f4"/><path d="M3 7.4l2.6 2.3 4.6-4.6" fill="none" stroke="#fff" stroke-width="1.4" stroke-linecap="round" stroke-linejoin="round"/></svg><div class="t" style="left:79px;top:826.0px;font-size:12.5px;color:#2f3439">cluster3</div><div class="cell" style="left:277.5px;width:110px;text-align:right;top:826.0px">31 106,05<span class="rub">₽</span></div><div class="cell" style="left:414.1px;width:110px;text-align:right;top:826.0px">31 048,76<span class="rub">₽</span></div><div class="cell" style="left:550.8px;width:110px;text-align:right;top:826.0px">31 179,96<span class="rub">₽</span></div><div class="cell" style="left:687.5px;width:110px;text-align:right;top:826.0px">31 322,64<span class="rub">₽</span></div><div class="cell" style="left:824.1px;width:110px;text-align:right;top:826.0px">31 276,62<span class="rub">₽</span></div><div class="cell" style="left:960.8px;width:110px;text-align:right;top:826.0px">31 299,05<span class="rub">₽</span></div><div class="cell" style="left:1097.4px;width:110px;text-align:right;top:826.0px">31 369,23<span class="rub">₽</span></div><div class="cell" style="left:1234.1px;width:110px;text-align:right;top:826.0px">31 340,90<span class="rub">₽</span></div><div class="cell" style="left:1370.7px;width:110px;text-align:right;top:826.0px">31 318,76<span class="rub">₽</span></div><div class="cell" style="left:1551.0px;width:110px;text-align:right;top:826.0px">935 856,98<span class="rub">₽</span></div><div class="abs" style="left:25px;top:848.5px;width:7px;height:32.5px;background:#f60000;border-radius:1px"></div><svg class="abs" style="left:49px;top:858.5px" width="13" height="14" viewBox="0 0 13 14"><rect x="0" y="0" width="13" height="14" rx="3.3" fill="#3e90f4"/><path d="M3 7.4l2.6 2.3 4.6-4.6" fill="none" stroke="#fff" stroke-width="1.4" stroke-linecap="round" stroke-linejoin="round"/></svg><div class="t" style="left:79px;top:859.5px;font-size:12.5px;color:#2f3439">cluster4</div><div class="cell" style="left:277.5px;width:110px;text-align:right;top:859.5px">30 899,25<span class="rub">₽</span></div><div class="cell" style="left:414.1px;width:110px;text-align:right;top:859.5px">30 996,15<span class="rub">₽</span></div><div class="cell" style="left:550.8px;width:110px;text-align:right;top:859.5px">30 784,51<span class="rub">₽</span></div><div class="cell" style="left:687.5px;width:110px;text-align:right;top:859.5px">30 893,97<span class="rub">₽</span></div><div class="cell" style="left:824.1px;width:110px;text-align:right;top:859.5px">30 872,81<span class="rub">₽</span></div><div class="cell" style="left:960.8px;width:110px;text-align:right;top:859.5px">30 783,78<span class="rub">₽</span></div><div class="cell" style="left:1097.4px;width:110px;text-align:right;top:859.5px">30 835,91<span class="rub">₽</span></div><div class="cell" style="left:1234.1px;width:110px;text-align:right;top:859.5px">30 896,52<span class="rub">₽</span></div><div class="cell" style="left:1370.7px;width:110px;text-align:right;top:859.5px">30 639,28<span class="rub">₽</span></div><div class="cell" style="left:1551.0px;width:110px;text-align:right;top:859.5px">925 035,59<span class="rub">₽</span></div><div class="abs" style="left:25px;top:882.0px;width:7px;height:32.5px;background:#03cff8;border-radius:1px"></div><svg class="abs" style="left:49px;top:892.0px" width="13" height="14" viewBox="0 0 13 14"><rect x="0" y="0" width="13" height="14" rx="3.3" fill="#3e90f4"/><path d="M3 7.4l2.6 2.3 4.6-4.6" fill="none" stroke="#fff" stroke-width="1.4" stroke-linecap="round" stroke-linejoin="round"/></svg><div class="t" style="left:79px;top:893.0px;font-size:12.5px;color:#2f3439">cluster7</div><div class="cell" style="left:277.5px;width:110px;text-align:right;top:893.0px">28 835,00<span class="rub">₽</span></div><div class="cell" style="left:414.1px;width:110px;text-align:right;top:893.0px">28 848,37<span class="rub">₽</span></div><div class="cell" style="left:550.8px;width:110px;text-align:right;top:893.0px">29 011,93<span class="rub">₽</span></div><div class="cell" style="left:687.5px;width:110px;text-align:right;top:893.0px">29 068,07<span class="rub">₽</span></div><div class="cell" style="left:824.1px;width:110px;text-align:right;top:893.0px">28 929,55<span class="rub">₽</span></div><div class="cell" style="left:960.8px;width:110px;text-align:right;top:893.0px">28 860,72<span class="rub">₽</span></div><div class="cell" style="left:1097.4px;width:110px;text-align:right;top:893.0px">28 732,21<span class="rub">₽</span></div><div class="cell" style="left:1234.1px;width:110px;text-align:right;top:893.0px">28 723,09<span class="rub">₽</span></div><div class="cell" style="left:1370.7px;width:110px;text-align:right;top:893.0px">28 945,38<span class="rub">₽</span></div><div class="cell" style="left:1551.0px;width:110px;text-align:right;top:893.0px">867 071,99<span class="rub">₽</span></div><div class="abs" style="left:25px;top:915.5px;width:7px;height:32.5px;background:#f6c31c;border-radius:1px"></div><svg class="abs" style="left:49px;top:925.5px" width="13" height="14" viewBox="0 0 13 14"><rect x="0" y="0" width="13" height="14" rx="3.3" fill="#3e90f4"/><path d="M3 7.4l2.6 2.3 4.6-4.6" fill="none" stroke="#fff" stroke-width="1.4" stroke-linecap="round" stroke-linejoin="round"/></svg><div class="t" style="left:79px;top:926.5px;font-size:12.5px;color:#2f3439">cluster1</div><div class="cell" style="left:277.5px;width:110px;text-align:right;top:926.5px">27 956,62<span class="rub">₽</span></div><div class="cell" style="left:414.1px;width:110px;text-align:right;top:926.5px">27 844,82<span class="rub">₽</span></div><div class="cell" style="left:550.8px;width:110px;text-align:right;top:926.5px">27 676,18<span class="rub">₽</span></div><div class="cell" style="left:687.5px;width:110px;text-align:right;top:926.5px">27 887,99<span class="rub">₽</span></div><div class="cell" style="left:824.1px;width:110px;text-align:right;top:926.5px">27 795,35<span class="rub">₽</span></div><div class="cell" style="left:960.8px;width:110px;text-align:right;top:926.5px">27 614,75<span class="rub">₽</span></div><div class="cell" style="left:1097.4px;width:110px;text-align:right;top:926.5px">27 837,58<span class="rub">₽</span></div><div class="cell" style="left:1234.1px;width:110px;text-align:right;top:926.5px">27 890,92<span class="rub">₽</span></div><div class="cell" style="left:1370.7px;width:110px;text-align:right;top:926.5px">27 900,37<span class="rub">₽</span></div><div class="cell" style="left:1551.0px;width:110px;text-align:right;top:926.5px">834 062,44<span class="rub">₽</span></div><div class="abs" style="left:25px;top:949.0px;width:7px;height:32.5px;background:#9b3ee8;border-radius:1px"></div><svg class="abs" style="left:49px;top:959.0px" width="13" height="14" viewBox="0 0 13 14"><rect x="0" y="0" width="13" height="14" rx="3.3" fill="#3e90f4"/><path d="M3 7.4l2.6 2.3 4.6-4.6" fill="none" stroke="#fff" stroke-width="1.4" stroke-linecap="round" stroke-linejoin="round"/></svg><div class="t" style="left:79px;top:960.0px;font-size:12.5px;color:#2f3439">cluster5</div><div class="cell" style="left:277.5px;width:110px;text-align:right;top:960.0px">263,45<span class="rub">₽</span></div><div class="cell" style="left:414.1px;width:110px;text-align:right;top:960.0px">158,84<span class="rub">₽</span></div><div class="cell" style="left:550.8px;width:110px;text-align:right;top:960.0px">143,29<span class="rub">₽</span></div><div class="cell" style="left:687.5px;width:110px;text-align:right;top:960.0px">286,19<span class="rub">₽</span></div><div class="cell" style="left:824.1px;width:110px;text-align:right;top:960.0px">313,28<span class="rub">₽</span></div><div class="cell" style="left:960.8px;width:110px;text-align:right;top:960.0px">42,77<span class="rub">₽</span></div><div class="cell" style="left:1097.4px;width:110px;text-align:right;top:960.0px">204,99<span class="rub">₽</span></div><div class="cell" style="left:1234.1px;width:110px;text-align:right;top:960.0px">312,77<span class="rub">₽</span></div><div class="cell" style="left:1370.7px;width:110px;text-align:right;top:960.0px">133,51<span class="rub">₽</span></div><div class="cell" style="left:1551.0px;width:110px;text-align:right;top:960.0px">3 657,13<span class="rub">₽</span></div><div class="abs" style="left:25px;top:983px;width:1649px;height:4.3px;background:#eceef0"></div><div class="abs" style="left:25px;top:983.2px;width:609px;height:3.8px;background:#a6aeb5;border-radius:0 1px 1px 0"></div>
<div class="btn" style="left:32px;top:997px;width:60px;height:26.5px;border-color:#e3e6ea">
<div class="t" style="left:11px;top:7.5px;font-size:12px;color:#3b4046">15</div>
<svg class="abs" style="left:45px;top:11px" width="9" height="6" viewBox="0 0 9 6"><path d="M1 1l3.5 3.5L8 1" fill="none" stroke="#8a939b" stroke-width="1.1"/></svg></div>
<div class="t" style="left:99px;top:1005px;font-size:12.2px;color:#2b3036">записей на странице</div>
<div class="t" style="left:789px;top:1005px;font-size:12px;font-weight:bold;color:#1d2126;letter-spacing:-0.27px">1–7 из 7 записей</div>
<div class="btn" style="left:1454.5px;top:997.5px;width:59px;height:25.5px;border-color:#eceef1;background:#f8f9fa">
<div class="t" style="left:9px;top:7px;font-size:12px;color:#b4b9be">1</div>
<svg class="abs" style="left:42px;top:11px" width="9" height="6" viewBox="0 0 9 6"><path d="M1 1l3.5 3.5L8 1" fill="none" stroke="#c2c7cc" stroke-width="1.1"/></svg></div>
<div class="t" style="left:1521px;top:1005px;font-size:12px;color:#2b3036">из 1 страниц</div>
<div class="btn" style="left:1611.5px;top:997.5px;width:27px;height:25.5px;border-color:#eceef1">
<svg class="abs" style="left:5px;top:6px" width="16" height="12" viewBox="0 0 16 12"><path d="M15 6H1.5M6.5 1L1.5 6l5 5" fill="none" stroke="#7d858c" stroke-width="1.4"/></svg></div>
<div class="btn" style="left:1642px;top:997.5px;width:27px;height:25.5px;border-color:#eceef1">
<svg class="abs" style="left:5px;top:6px" width="16" height="12" viewBox="0 0 16 12"><path d="M1 6h13.5M9.5 1l5 5-5 5" fill="none" stroke="#7d858c" stroke-width="1.4"/></svg></div>

<div class="abs" style="left:1666.3px;top:842px;width:30px;height:174px;background:#4594f5;border-radius:5px 0 0 5px">
<div class="t" style="left:15.5px;top:78px;font-size:11.7px;font-weight:bold;color:#fff;transform:translate(-50%,-50%) rotate(-90deg);transform-origin:50% 50%">Новое в Клаудмастер!</div>
</div>
<svg class="abs" style="left:0;top:0" width="1701" height="1040"><g transform="translate(1679.4 996.9) rotate(-90)" fill="none" stroke="#e6f0fd" stroke-width="1.4">
<path d="M-2 6.3C-2 4.5-5.6 3-5.6-0.6A5.6 5.6 0 1 1 5.6-0.6C5.6 3 2 4.5 2 6.3Z"/><path d="M-2 8.6H2M-1 10.6H1" stroke-width="1.6"/></g></svg>
<div class="abs" style="left:1657px;top:832.7px;width:17px;height:17px;border-radius:50%;background:#ef3b31"></div>
<div class="t" style="left:1665.6px;top:841.4px;font-size:11px;font-weight:bold;color:#fff;transform:translate(-50%,-50%) rotate(-90deg)">28</div>

<div class="abs" style="left:1600px;top:938px;width:59px;height:59px;border-radius:50%;background:#d2e3fb;box-shadow:inset 0 0 0 1px #c4daf9"></div>
<div class="abs" style="left:1606px;top:944px;width:47px;height:47px;border-radius:50%;background:#1273f6"></div>
<svg class="abs" style="left:0;top:0" width="1701" height="1040"><g fill="#fff">
<path d="M1621.2 957.2H1633.5Q1634.7 957.2 1634.7 958.4V967.6Q1634.7 968.8 1633.5 968.8H1626.9L1623.2 972.8L1621.6 968.8H1621.2Q1620 968.8 1620 967.6V958.4Q1620 957.2 1621.2 957.2Z"/>
<path d="M1636.9 962.5H1638Q1639.2 962.5 1639.2 963.7V972.9H1637.9L1637.3 976.2L1634.1 972.9H1628.6Q1627.4 972.9 1627.4 971.7V970.7H1633.5Q1636.9 970.7 1636.9 967.3Z"/>
</g></svg>
<svg class="abs" style="left:0;top:0" width="1701" height="1040" viewBox="0 0 1701 1040" fill="none" stroke="#8a00de" stroke-width="2" stroke-linecap="round" stroke-linejoin="round"><circle cx="234.3" cy="79.8" r="13.4"/><path transform="translate(234.3 79.8)" stroke-width="1.9" d="M-2.1 -1.8 Q0 -4 1.7 -7.6 L-0.7 7.2 M-4.7 7.7 L2.5 7.6"/><path stroke-width="2.1" d="M221.1 85.6 C214.1 86.4 210.5 91.3 209.5 99.3"/><path stroke-width="2.3" d="M203.8 91.6 L209.5 99.3 L217.4 93.4"/><circle cx="433.3" cy="78.8" r="13.4"/><path transform="translate(433.3 78.8)" stroke-width="1.9" d="M-4.4 -2.5 Q-1 -7.6 1.9 -7.6 Q5 -7.6 4.5 -5.5 Q3 -2 -6.1 7.6 L4.9 7.2"/><path stroke-width="2.1" d="M420.1 84.6 C413.1 85.4 409.5 90.3 408.5 98.3"/><path stroke-width="2.3" d="M402.8 90.6 L408.5 98.3 L416.4 92.4"/><circle cx="655.3" cy="80.8" r="13.4"/><path transform="translate(655.3 80.8)" stroke-width="1.9" d="M-4.8 -4.4 Q0 -7 3.5 -7 Q6 -5.5 2 -3 L-2.7 -0.8 Q5 -2 5 2.5 Q4.5 7.6 -1.2 7.6 Q-5 7.6 -6.2 3.6"/><path stroke-width="2.1" d="M642.1 86.6 C635.1 87.4 631.5 92.3 630.5 100.3"/><path stroke-width="2.3" d="M624.8 92.6 L630.5 100.3 L638.4 94.4"/><rect x="26.3" y="161.4" width="216.2" height="30.4" rx="10"/><circle cx="260.3" cy="211.9" r="13.4"/><path transform="translate(260.3 211.9)" stroke-width="1.9" d="M2.8 -7.4 L-6.5 0.6 L3.2 0.6 M2.8 -7.4 L0 7.4"/><path stroke-width="2.1" d="M247.4 207 C240 205 236.5 200 235.4 193.5"/><path stroke-width="2.3" d="M229.9 200.7 L235.4 193 L243.2 199.2"/><rect x="632" y="610.7" width="435.3" height="21.7" rx="10.8"/><circle cx="53.3" cy="630.9" r="13.4"/><path transform="translate(53.3 630.9)" stroke-width="1.9" d="M-1.5 -6 Q2 -5 5.5 -6.4 M-1.5 -6 L-3.6 1.6 Q4.5 0 3.9 4 Q3.5 7.6 -1.2 7.6 Q-4.2 7.6 -4.8 5.2"/><path stroke-width="2" d="M67.5 630.8 C200 616 450 612 631 622"/><path stroke-width="2.1" d="M624.5 615.5 L631 622 L624.5 628.5"/><path stroke-width="2" d="M52.4 644.5 C47 665 47 690 50 710.5"/><path stroke-width="2.2" d="M44.5 703 L50 710.5 L56 703"/><rect x="37" y="712" width="36" height="267.8" rx="9"/><rect x="77" y="712" width="1452" height="267.8" rx="10"/><circle cx="1508.4" cy="729.9" r="13.4"/><path transform="translate(1508.4 729.9)" stroke-width="1.9" d="M3 -7.5 Q-3 -3 -4.9 4 Q-5 7.6 -2.5 7.4 Q3 6.5 3 2.8 Q2.8 -0.3 0 0 Q-3 0.3 -4.6 3.1"/><circle cx="1655.5" cy="652.8" r="13.4"/><path transform="translate(1655.5 652.8)" stroke-width="1.9" d="M-4 -4.8 Q0 -5.5 4.8 -6.2 L-2.5 7.5 M-2.8 1.2 L2.5 0.8"/><path stroke-width="2.1" d="M1643.3 660.3 C1637 663 1633 668 1631.4 675"/><path stroke-width="2.3" d="M1627.4 666 L1631.4 675 L1640.4 670.4"/></svg>
</div></body></html>
